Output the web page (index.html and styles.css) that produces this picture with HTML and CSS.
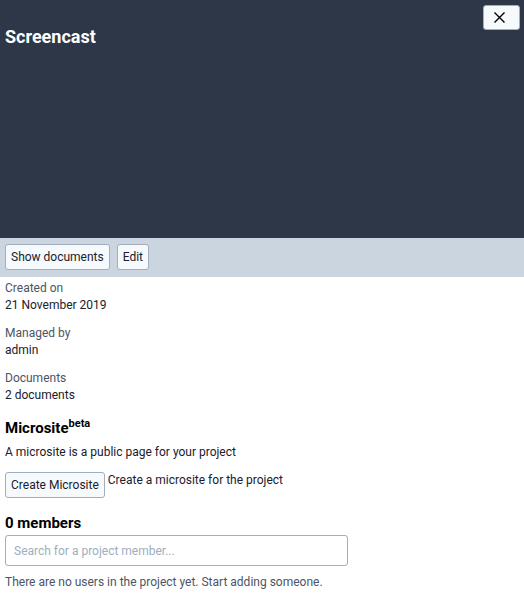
FILE: index.html
```html
<!DOCTYPE html>
<html>
<head>
<meta charset="utf-8">
<link rel="stylesheet" href="styles.css">
</head>
<body>
<div class="hero">
  <h1 class="title">Screencast</h1>
  <button class="close" aria-label="Close"><svg width="11" height="11" viewBox="0 0 11 11"><path d="M0.5 0.5L10.5 10.5M10.5 0.5L0.5 10.5" stroke="#000" stroke-width="1.4" fill="none"/></svg></button>
</div>
<div class="toolbar">
  <button class="btn">Show documents</button>
  <button class="btn">Edit</button>
</div>
<div class="content">
  <div class="field">
    <div class="label">Created on</div>
    <div class="value">21 November 2019</div>
  </div>
  <div class="field">
    <div class="label">Managed by</div>
    <div class="value">admin</div>
  </div>
  <div class="field">
    <div class="label">Documents</div>
    <div class="value">2 documents</div>
  </div>
  <h2 class="heading">Microsite<sup class="beta">beta</sup></h2>
  <p class="text">A microsite is a public page for your project</p>
  <div class="row">
    <button class="btn">Create Microsite</button>
    <span class="text">Create a microsite for the project</span>
  </div>
  <h2 class="heading members">0 members</h2>
  <input class="search" type="text" placeholder="Search for a project member...">
  <p class="text muted">There are no users in the project yet. Start adding someone.</p>
</div>
</body>
</html>
```
FILE: styles.css
```css
* { box-sizing: border-box; }
body {
  margin: 0;
  font-family: "Roboto", "Open Sans", sans-serif;
  font-size: 12px;
  color: #1a202c;
  background: #fff;
}
.hero {
  position: relative;
  background: #2e3748;
  height: 238px;
  padding: 25px 5px 0;
}
.title {
  margin: 0;
  color: #fff;
  font-size: 18px;
  font-weight: 700;
  line-height: 24px;
}
.close {
  position: absolute;
  top: 5px;
  right: 4px;
  width: 37px;
  height: 25px;
  background: #f7fafc;
  border: 1px solid #a0aec0;
  border-radius: 3px;
  padding: 0 5px 0 0;
  display: flex;
  align-items: center;
  justify-content: center;
}
.toolbar {
  background: #cbd5e0;
  height: 39px;
  padding: 6px 5px;
  display: flex;
  gap: 7px;
  align-items: flex-start;
}
.btn {
  font-family: inherit;
  font-size: 12px;
  color: #1a202c;
  background: #f7fafc;
  border: 1px solid #a0aec0;
  border-radius: 3px;
  height: 26px;
  padding: 0 5px;
}
.content {
  padding: 2px 5px 0;
}
.field {
  margin-bottom: 10px;
}
.label {
  color: #4a5568;
  line-height: 18px;
}
.value {
  line-height: 17px;
}
.heading {
  margin: 13px 0 0;
  font-size: 15px;
  font-weight: 700;
  line-height: 22px;
  color: #000;
}
.beta {
  font-size: 11px;
  line-height: 0;
}
.text {
  margin: 5px 0 0;
  line-height: 17px;
}
.row {
  display: flex;
  align-items: flex-start;
  gap: 3px;
  margin-top: 11px;
}
.row .text { margin: 0; }
.members { margin-top: 14px; }
.search {
  display: block;
  margin-top: 1px;
  width: 343px;
  height: 31px;
  border: 1px solid #a0aec0;
  border-radius: 3px;
  padding: 0 8px;
  font-family: inherit;
  font-size: 12px;
}
.search::placeholder { color: #a0aec0; }
.muted { color: #4a5568; margin-top: 8px; }
```
